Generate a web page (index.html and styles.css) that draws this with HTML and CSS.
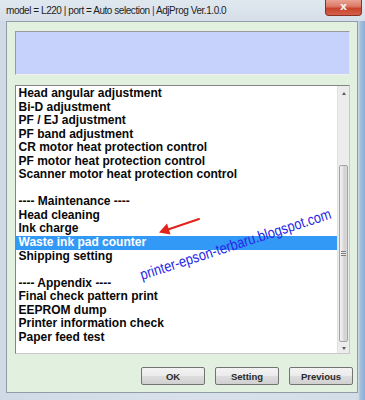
FILE: index.html
```html
<!DOCTYPE html>
<html>
<head>
<meta charset="utf-8">
<link rel="stylesheet" href="styles.css">
</head>
<body>
<div class="window">
  <div class="titlebar">
    <span class="title">model = L220 | port = Auto selection <span class="sep">|</span> AdjProg Ver.1.0.0</span>
    <div class="close"><span>x</span></div>
  </div>
  <div class="client">
    <div class="infobox"></div>
    <div class="listbox">
      <ul class="items">
        <li>Head angular adjustment</li>
        <li>Bi-D adjustment</li>
        <li>PF / EJ adjustment</li>
        <li>PF band adjustment</li>
        <li>CR motor heat protection control</li>
        <li>PF motor heat protection control</li>
        <li>Scanner motor heat protection control</li>
        <li>&nbsp;</li>
        <li>---- Maintenance ----</li>
        <li>Head cleaning</li>
        <li>Ink charge</li>
        <li class="selected">Waste ink pad counter</li>
        <li>Shipping setting</li>
        <li>&nbsp;</li>
        <li>---- Appendix ----</li>
        <li>Final check pattern print</li>
        <li>EEPROM dump</li>
        <li>Printer information check</li>
        <li>Paper feed test</li>
      </ul>
      <div class="scrollbar">
        <div class="sb-arrow up"><i></i></div>
        <div class="sb-track">
          <div class="thumb"><span class="grip"></span></div>
        </div>
        <div class="sb-arrow down"><i></i></div>
      </div>
    </div>
    <div class="buttons">
      <button class="btn">OK</button>
      <button class="btn">Setting</button>
      <button class="btn">Previous</button>
    </div>
  </div>
  <svg class="overlay" width="365" height="400" viewBox="0 0 365 400">
    <line x1="199" y1="219" x2="168" y2="229.5" stroke="#e3221c" stroke-width="2" stroke-linecap="round"/>
    <polygon points="159,232.5 170.5,234.5 167,223.5" fill="#e3221c"/>
    <text x="0" y="0" transform="translate(142,280) rotate(-18)" font-family="Liberation Sans, Arial, sans-serif" font-size="15" fill="#2626e6" textLength="200" lengthAdjust="spacingAndGlyphs">printer-epson-terbaru.blogspot.com</text>
  </svg>
</div>
</body>
</html>
```

FILE: styles.css
```css
html, body {
  margin: 0;
  padding: 0;
}
body {
  width: 365px;
  height: 400px;
  overflow: hidden;
  font-family: "Liberation Sans", Arial, sans-serif;
  background: #d5dfea;
}
.window {
  position: relative;
  height: 400px;
  display: flex;
  flex-direction: column;
  background: linear-gradient(to right, #cfdae6 0, #d8e1eb 50%, #d3dde8 358px, #a8c1df 360px, #8cadd8 365px);
}
.titlebar {
  height: 21px;
  display: flex;
  align-items: flex-start;
  justify-content: space-between;
  padding-left: 6px;
  background: linear-gradient(to bottom, #dfe7ef, #d6dfe9);
}
.title {
  font-size: 10px;
  letter-spacing: -0.45px;
  color: #1e1e1e;
  line-height: 21px;
}
.sep {
  color: #2b3a9c;
}
.close {
  width: 35px;
  height: 15px;
  margin-right: 3px;
  border: 1px solid #8d2f22;
  border-top: none;
  border-radius: 0 0 4px 4px;
  background: linear-gradient(to bottom, #e9a394 0, #dc7563 45%, #c8432c 55%, #d4604a 100%);
  display: flex;
  align-items: center;
  justify-content: center;
}
.close span {
  font-family: "DejaVu Sans", sans-serif;
  font-weight: bold;
  font-size: 11px;
  line-height: 11px;
  color: #f3efee;
  margin-top: -2px;
}
.client {
  flex: 1;
  margin: 0 7px 7px 6px;
  background: #e2f0df;
  border: 1px solid #8f9ca9;
  display: flex;
  flex-direction: column;
  padding: 9px 7px 0 8px;
}
.infobox {
  height: 42px;
  background: #c6d2fb;
  border: 1px solid;
  border-color: #9a9a9a #e6e6e6 #f0f0f0 #9a9a9a;
}
.listbox {
  position: relative;
  margin-top: 10px;
  height: 267px;
  background: #ffffff;
  border: 1px solid #848484;
  border-right-color: #c8c8c8;
  border-bottom-color: #c8c8c8;
  display: flex;
}
.items {
  flex: 1;
  margin: 0;
  padding: 1px 0 0 0;
  list-style: none;
  font-size: 12px;
  font-weight: bold;
  color: #080808;
}
.items li {
  height: 13.55px;
  line-height: 13.55px;
  padding-left: 2.5px;
  white-space: nowrap;
}
.items li.selected {
  background: #3399f7;
  color: #ffffff;
}
.scrollbar {
  width: 11px;
  display: flex;
  flex-direction: column;
  background: #ececec;
  border-left: 1px solid #e2e2e2;
}
.sb-arrow {
  display: flex;
  align-items: center;
  justify-content: center;
}
.sb-arrow.up {
  height: 14px;
}
.sb-arrow.down {
  height: 10px;
}
.sb-arrow i {
  width: 0;
  height: 0;
  border-left: 2.5px solid transparent;
  border-right: 2.5px solid transparent;
}
.sb-arrow.up i {
  border-bottom: 3px solid #5a5a5a;
}
.sb-arrow.down i {
  border-top: 3px solid #5a5a5a;
}
.sb-track {
  flex: 1;
  padding-top: 65px;
}
.thumb {
  height: 175px;
  margin: 0 1px;
  border: 1px solid #a2a2a2;
  border-radius: 2px;
  background: linear-gradient(to right, #f3f3f3 0, #e2e2e2 45%, #d0d0d0 55%, #dadada 100%);
  display: flex;
  align-items: center;
  justify-content: center;
}
.grip {
  width: 5px;
  height: 5px;
  background: repeating-linear-gradient(to bottom, #7d7d7d 0, #7d7d7d 1px, #e8e8e8 1px, #e8e8e8 2px);
}
.buttons {
  display: flex;
  justify-content: flex-end;
  gap: 10px;
  margin-top: 13px;
  margin-right: -3px;
}
.btn {
  width: 64px;
  height: 18px;
  padding: 0;
  border: 1px solid #737373;
  border-radius: 2px;
  background: linear-gradient(to bottom, #f3f3f3 0, #ebebeb 48%, #dddddd 52%, #d0d0d0 100%);
  font-family: "Liberation Sans", Arial, sans-serif;
  font-weight: bold;
  font-size: 9.5px;
  color: #2a2a2a;
}
.overlay {
  position: absolute;
  left: 0;
  top: 0;
  pointer-events: none;
}
```
